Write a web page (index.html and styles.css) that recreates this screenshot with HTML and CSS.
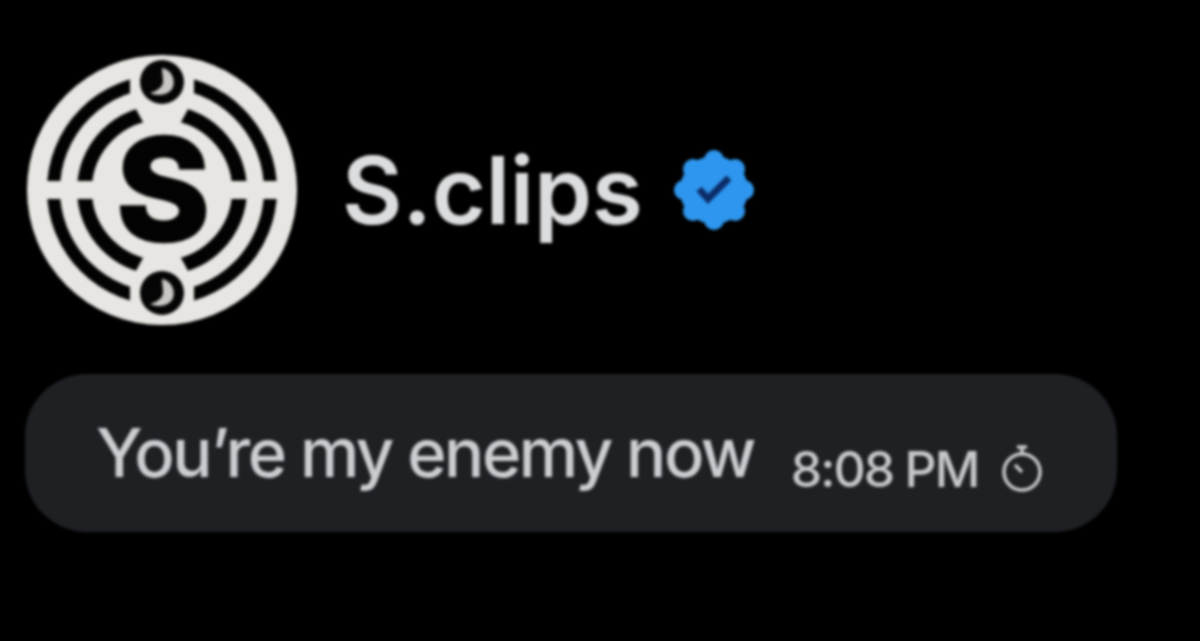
FILE: index.html
```html
<!DOCTYPE html>
<html lang="en">
<head>
<meta charset="utf-8">
<title>S.clips</title>
<link rel="stylesheet" href="styles.css">
</head>
<body>
<main class="page">
  <header class="profile">
    <svg class="avatar" viewBox="-135 -135 270 270" aria-label="S.clips logo">
      <circle class="logo-fill" r="135"/>
      <circle class="logo-ring ring-outer" r="108.5"/>
      <circle class="logo-ring ring-inner" r="77.5"/>
      <path class="logo-fill" d="M-124 -9H-66L-66 -6H66L66 -9H124V9H66L66 6H-66L-66 9H-124Z"/>
      <path class="logo-fill" d="M-32 -122H32V-92L18 -66H-18L-32 -92Z"/>
      <path class="logo-fill" d="M-32 122H32V92L18 66H-18L-32 92Z"/>
      <circle class="logo-fill" r="70"/>
      <g transform="translate(0 -108)">
        <circle class="logo-dark" r="22"/>
        <path class="note-fill" d="M0 -14C8 -13 14 -4 11 5C8 13 -4 15 -12 11C-4 9 2 4 1 -2C1 -6 0 -9 0 -14Z"/>
      </g>
      <g transform="translate(0 103)">
        <circle class="logo-dark" r="22"/>
        <path class="note-fill" d="M0 -14C8 -13 14 -4 11 5C8 13 -4 15 -12 11C-4 9 2 4 1 -2C1 -6 0 -9 0 -14Z"/>
      </g>
      <text class="logo-s" x="1" y="51" text-anchor="middle">S</text>
    </svg>
    <h1 class="name">S.clips</h1>
    <svg class="badge" viewBox="-42 -42 84 84" aria-label="Verified">
      <g class="badge-fill">
        <circle r="34"/>
        <circle cy="-30" r="10"/>
        <circle cy="30" r="10"/>
        <circle cx="-30" r="10"/>
        <circle cx="30" r="10"/>
        <circle cx="-21" cy="-21" r="10"/>
        <circle cx="21" cy="-21" r="10"/>
        <circle cx="-21" cy="21" r="10"/>
        <circle cx="21" cy="21" r="10"/>
      </g>
      <path class="badge-check" d="M-15 -1L-6 9L15 -12"/>
    </svg>
  </header>
  <section class="bubble">
    <p class="message">You’re my enemy now</p>
    <time class="time">8:08 PM</time>
    <svg class="timer" viewBox="-22 -28 44 50" aria-label="Disappearing message">
      <circle r="18"/>
      <path d="M-5 -25H5M0 -25V-18M-7 -7L0 0"/>
    </svg>
  </section>
</main>
</body>
</html>
```
FILE: styles.css
```css
* { box-sizing: border-box; }
html, body { margin: 0; height: 100%; background: #000; }
body { overflow: hidden; font-family: Inter, "Liberation Sans", Arial, sans-serif; }
.page {
  height: 641px;
  padding: 53px 83px 0 25px;
  display: flex;
  flex-direction: column;
  gap: 47px;
  filter: blur(1.4px);
}
.profile { display: flex; align-items: center; padding-left: 2px; height: 274px; }
.avatar { width: 270px; height: 270px; flex: none; }
.logo-fill { fill: #e8e6e2; }
.logo-dark { fill: #050505; }
.note-fill { fill: #c9c7c3; }
.logo-ring { fill: none; stroke: #030303; }
.ring-outer { stroke-width: 13; }
.ring-inner { stroke-width: 15; }
.logo-s {
  font-family: Inter, "Liberation Sans", Arial, sans-serif;
  font-weight: 800;
  font-size: 142px;
  fill: #030303;
  stroke: #030303;
  stroke-width: 2.5px;
}
.name {
  margin: 0 0 0 45px;
  font-size: 93px;
  font-weight: 600;
  line-height: 1;
  letter-spacing: -0.2px;
  color: #dcdddf;
}
.badge { width: 84px; height: 84px; margin-left: 29px; flex: none; }
.badge-fill { fill: #2e96ee; }
.badge-check { fill: none; stroke: #0b2c68; stroke-width: 7; }
.bubble {
  width: 1092px;
  height: 158px;
  background: #1e2024;
  border-radius: 62px;
  padding-left: 71px;
  display: flex;
  align-items: flex-start;
}
.message { margin: 45px 0 0; font-size: 67px; font-weight: 500; line-height: 1; letter-spacing: -2.5px; color: #cbcdd1; }
.time { margin: 70px 0 0 37px; font-size: 50px; font-weight: 500; line-height: 1; letter-spacing: -2px; color: #c6c8cb; }
.timer {
  width: 44px;
  height: 50px;
  margin: 70px 0 0 22px;
  fill: none;
  stroke: #c6c8cb;
  stroke-width: 3.5;
}
```
